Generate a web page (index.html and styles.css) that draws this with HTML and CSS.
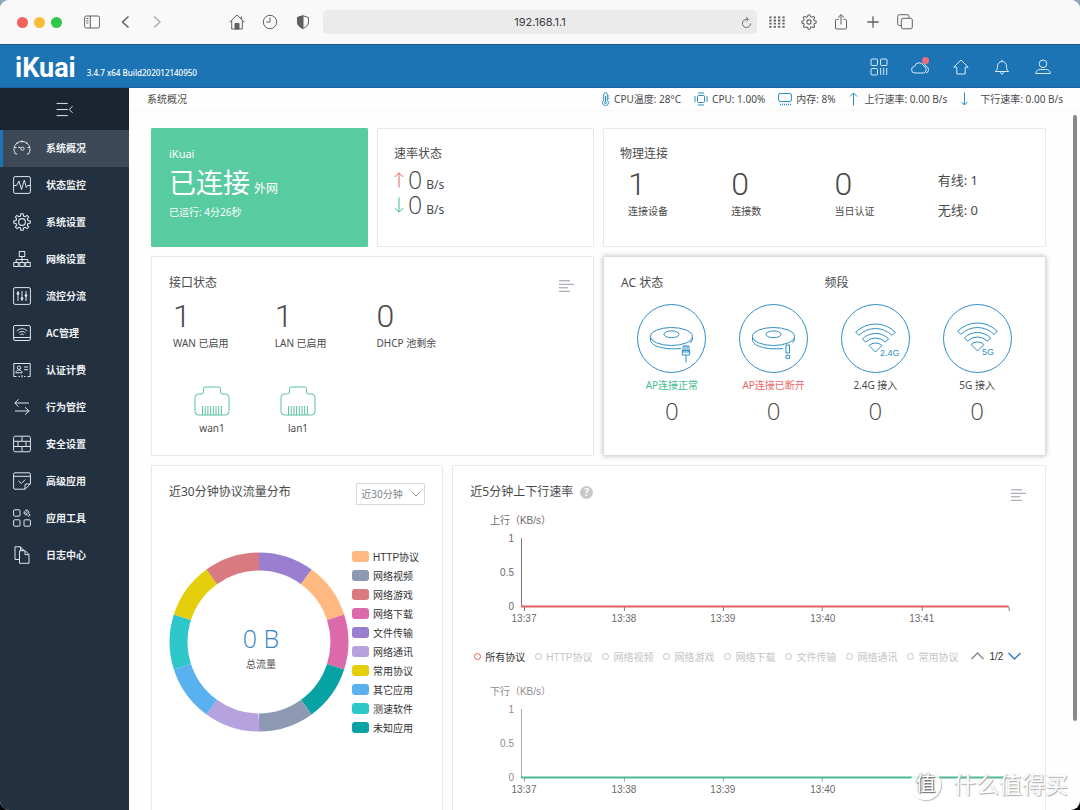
FILE: index.html
```html
<!DOCTYPE html>
<html lang="zh-CN">
<head>
<meta charset="utf-8">
<title>iKuai 系统概况</title>
<link rel="stylesheet" href="styles.css">
</head>
<body>
<div class="window">
  <div class="toolbar">
    <div class="lights"><span class="light red"></span><span class="light yellow"></span><span class="light green"></span></div>
    <div class="nav-tools">
      <button class="tool" aria-label="边栏"><svg viewBox="0 0 16 16"><rect x=".6" y="2" width="15" height="12" rx="1.8"/><path d="M6.3 2v12M2.400 4.500h2M2.400 6.800h2M2.400 9h2"/></svg></button>
      <button class="tool" aria-label="后退"><svg viewBox="0 0 16 16"><path d="M11.500 2.500L5.500 8l6 5.500" stroke-width="1.500"/></svg></button>
      <button class="tool dim" aria-label="前进"><svg viewBox="0 0 16 16"><path d="M4 2.500l6 5.500-6 5.500" stroke-width="1.300"/></svg></button>
    </div>
    <div class="page-tools">
      <button class="tool" aria-label="主页"><svg viewBox="0 0 16 16"><path d="M.5 8.300L8 1l7.500 7.300M2.700 6.500V15h10.600V6.500M12.300 5V2.300"/><path d="M6 15V9.500h4V15z" fill="currentColor"/></svg></button>
      <button class="tool" aria-label="历史"><svg viewBox="0 0 16 16"><circle cx="8" cy="8" r="6.700"/><path d="M8 3.500V8H4.200"/></svg></button>
      <button class="tool" aria-label="隐私"><svg viewBox="0 0 16 16"><path d="M8 1.800l5.500 1.700V8c0 2.800-2 5-5.500 6.500C4.500 13 2.500 10.800 2.500 8V3.500z"/><path d="M8 1.800V14.500C4.500 13 2.500 10.800 2.500 8V3.500z" fill="currentColor"/></svg></button>
    </div>
    <div class="address">
      <input class="address-input" type="text" aria-label="地址" value="192.168.1.1">
      <button class="reload" aria-label="重新载入"><svg viewBox="0 0 12 14"><path d="M10.500 8a4.500 4.500 0 1 1-4-4.500h1.200M5.500 1l2.500 2.500L5.500 6"/></svg></button>
    </div>
    <div class="window-tools">
      <button class="tool" aria-label="常用网站"><svg viewBox="0 0 16 16"><path d="M.3 3.300h15.400M.3 6.500h15.400M.3 9.700h15.400M.3 12.900h15.400" stroke-width="1.800" stroke-dasharray="2.300 2.060"/></svg></button>
      <button class="tool" aria-label="设置"><svg viewBox="0 0 24 24" stroke-width="1.600"><circle cx="12" cy="12" r="3.200"/><path d="M19.400 15a1.650 1.650 0 0 0 .33 1.820l.06.06a2 2 0 0 1 0 2.830 2 2 0 0 1-2.830 0l-.06-.06a1.650 1.650 0 0 0-1.820-.33 1.650 1.650 0 0 0-1 1.510V21a2 2 0 0 1-2 2 2 2 0 0 1-2-2v-.09A1.650 1.650 0 0 0 9 19.400a1.650 1.650 0 0 0-1.820.33l-.06.06a2 2 0 0 1-2.830 0 2 2 0 0 1 0-2.830l.06-.06a1.650 1.650 0 0 0 .33-1.820 1.650 1.650 0 0 0-1.510-1H3a2 2 0 0 1-2-2 2 2 0 0 1 2-2h.09A1.650 1.650 0 0 0 4.600 9a1.650 1.650 0 0 0-.33-1.820l-.06-.06a2 2 0 0 1 0-2.830 2 2 0 0 1 2.830 0l.06.06a1.650 1.650 0 0 0 1.820.33H9a1.650 1.650 0 0 0 1-1.510V3a2 2 0 0 1 2-2 2 2 0 0 1 2 2v.09a1.650 1.650 0 0 0 1 1.510 1.650 1.650 0 0 0 1.820-.33l.06-.06a2 2 0 0 1 2.830 0 2 2 0 0 1 0 2.830l-.06.06a1.650 1.650 0 0 0-.33 1.820V9a1.650 1.650 0 0 0 1.510 1H21a2 2 0 0 1 2 2 2 2 0 0 1-2 2h-.09a1.650 1.650 0 0 0-1.510 1z"/></svg></button>
      <button class="tool" aria-label="共享"><svg viewBox="0 0 16 16"><path d="M5.500 5.500H3.500a1 1 0 0 0-1 1V14a1 1 0 0 0 1 1h9a1 1 0 0 0 1-1V6.500a1 1 0 0 0-1-1h-2M8 10.500V.8M5 3.500L8 .7l3 2.800"/></svg></button>
      <button class="tool" aria-label="新标签页"><svg viewBox="0 0 16 16"><path d="M8 2.300v11.400M2.300 8h11.400" stroke-width="1.300"/></svg></button>
      <button class="tool" aria-label="标签页概览"><svg viewBox="0 0 16 16"><rect x="4.300" y="4.300" width="11" height="10.500" rx="1.800"/><path d="M4.300 11.500H2.500A1.800 1.800 0 0 1 .7 9.700V2.500A1.800 1.800 0 0 1 2.500.7h7.700A1.800 1.800 0 0 1 12 2.500v1.800"/></svg></button>
    </div>
  </div>

  <header class="header">
    <span class="logo">iKuai</span>
    <span class="version">3.4.7 x64 Build202012140950</span>
    <div class="header-actions">
      <button class="action" aria-label="应用"><svg viewBox="0 0 18 18"><rect x="1" y="1" width="6.500" height="6.500" rx="1"/><rect x="10.500" y="1" width="6.500" height="6.500" rx="1"/><rect x="1" y="10.500" width="6.500" height="6.500" rx="1"/><path d="M10.700 10v7M13.700 10v7M16.700 10v7"/></svg></button>
      <button class="action" aria-label="云服务"><svg viewBox="0 0 18 18"><path d="M4 15a3.300 3.300 0 0 1-.3-6.600A4.600 4.600 0 0 1 12.600 8a3.600 3.600 0 0 1-.3 7zM12 5a4 4 0 0 1 2.700 3.200A3.500 3.500 0 0 1 15 15"/></svg><span class="dot"></span></button>
      <button class="action" aria-label="首页"><svg viewBox="0 0 18 18"><path d="M9 2L1.800 9.200h3V16h8.400V9.200h3z"/></svg></button>
      <button class="action" aria-label="通知"><svg viewBox="0 0 18 18"><path d="M2.300 13.500c2-1.500 2.200-3.500 2.200-5.500a4.500 4.500 0 0 1 9 0c0 2 .2 4 2.200 5.500zM7.700 13.500v1.200a1.300 1.300 0 0 0 2.600 0v-1.200M9 3.500V1.800"/></svg></button>
      <button class="action" aria-label="用户"><svg viewBox="0 0 18 18"><circle cx="9" cy="5.800" r="3.800"/><path d="M1.800 15.500c0-3 2.200-4 4.700-4h5c2.500 0 4.700 1 4.700 4z"/></svg></button>
    </div>
  </header>

  <div class="body">
    <nav class="sidebar">
      <button class="collapse" aria-label="收起菜单"><svg viewBox="0 0 18 16"><path d="M0 1.500h12M0 8h12M0 14.500h12M17 4.500L13.500 8l3.500 3.500"/></svg></button>
      <a class="item active" href="#"><svg viewBox="0 0 18 18"><path d="M4.300 15H2.500a8 8 0 1 1 13 0h-1.800M9 1.500v2M1.500 8.500h2M14.500 8.500h2M3.700 3.700l1.300 1.300M14.300 3.700L13 5M5 8l3 1"/><circle cx="9.500" cy="9.700" r="1.600"/></svg><span>系统概况</span></a>
      <a class="item" href="#"><svg viewBox="0 0 18 18"><rect x=".6" y=".6" width="16.800" height="16.800" rx="1.500"/><path d="M.6 9.500h3L6 5l2.500 8.500L11.300 4l2 7.500 1.200-2h3"/></svg><span>状态监控</span></a>
      <a class="item" href="#"><svg viewBox="0 0 24 24" stroke-width="1.500"><circle cx="12" cy="12" r="4.500"/><path d="M10 4L10.500 1h3l.5 3 2.200.9 2.500-1.700 2.100 2.100-1.700 2.500.9 2.200 3 .5v3l-3 .5-.9 2.200 1.700 2.500-2.100 2.100-2.500-1.700-2.200.9-.5 3h-3l-.5-3-2.200-.9-2.500 1.700-2.100-2.100 1.700-2.500L4 14l-3-.5v-3l3-.5.9-2.200-1.700-2.500 2.100-2.100 2.500 1.700z"/></svg><span>系统设置</span></a>
      <a class="item" href="#"><svg viewBox="0 0 18 18"><rect x="6.300" y="1.500" width="5.400" height="5"/><path d="M9 6.500v6M3.200 12.500v-3h11.600v3"/><rect x=".8" y="12.500" width="4.500" height="4"/><rect x="6.800" y="12.500" width="4.500" height="4"/><rect x="12.700" y="12.500" width="4.500" height="4"/></svg><span>网络设置</span></a>
      <a class="item" href="#"><svg viewBox="0 0 18 18"><rect x=".6" y=".6" width="16.800" height="16.800" rx="1.500"/><path d="M5 4v10M9 4v10M13 4v10"/><g fill="currentColor"><circle cx="5" cy="6.500" r="1"/><circle cx="9" cy="11.500" r="1"/><circle cx="13" cy="8.500" r="1"/></g></svg><span>流控分流</span></a>
      <a class="item" href="#"><svg viewBox="0 0 18 18"><rect x=".6" y="1.500" width="16.800" height="15" rx="1.500"/><path d="M.6 13.500h16.800M3.700 7c3-3 7.600-3 10.600 0M5.500 9c2-2 5-2 7 0M7.300 10.800c1-1 2.400-1 3.400 0"/></svg><span>AC管理</span></a>
      <a class="item" href="#"><svg viewBox="0 0 18 18"><path d="M3.500 15.500H.8v-13h16.400v13h-2.700M5.500 15.500h1.500M11 15.500h1.500M9 14v2.500"/><circle cx="6" cy="6.700" r="1.700"/><path d="M2.800 11.800c.5-2 1.500-2.800 3.200-2.800s2.700.8 3.200 2.800zM11 6h4M11 8.700h4"/></svg><span>认证计费</span></a>
      <a class="item" href="#"><svg viewBox="0 0 18 18"><path d="M16 5H1.800M5.500 1.300L1.800 5l3.700 3.700M2 13h14.200M12 9.300l4.200 3.700L12 16.700"/></svg><span>行为管控</span></a>
      <a class="item" href="#"><svg viewBox="0 0 18 18"><rect x=".6" y="1.200" width="16.800" height="15.600" rx="1.500"/><path d="M.6 6.300h16.800M.6 11.500h16.800M9 1.200v5.100M5 6.300v5.200M13 6.300v5.200M9 11.500v5.300"/></svg><span>安全设置</span></a>
      <a class="item" href="#"><svg viewBox="0 0 18 18"><path d="M12 17.200H2A1.400 1.400 0 0 1 .6 15.800V2.200A1.400 1.400 0 0 1 2 .8h14a1.400 1.400 0 0 1 1.400 1.400V12L12 17.200V13a1 1 0 0 1 1-1h4.400M.6 4.300h16.800M5.500 9l2.800 2.500 4-4"/></svg><span>高级应用</span></a>
      <a class="item" href="#"><svg viewBox="0 0 18 18"><rect x=".6" y=".8" width="6.400" height="6.400" rx="1"/><rect x=".6" y="10.800" width="6.400" height="6.400" rx="1"/><rect x="11" y="10.800" width="6.400" height="6.400" rx="1"/><path d="M12.500 1.200l2.300 2.300-1.300 1.300-2.300-2.300c-.8 2 .8 4 3 3.300l1.600 1.600 1.400-1.400-1.500-1.500c.8-2.300-1-4.200-3.200-3.300z"/></svg><span>应用工具</span></a>
      <a class="item" href="#"><svg viewBox="0 0 18 18"><path d="M6 13.500H2V.8h5.500l3 3.200M7.500.8V4h3M6.500 4.700h5.700l3.800 3.800v8.800H6.500zM12 4.700v4h4"/></svg><span>日志中心</span></a>
    </nav>

    <main class="main">
      <div class="statusbar">
        <span class="crumb">系统概况</span>
        <span class="stat"><svg class="thermo" viewBox="0 0 9 14"><path d="M2.700 8.300V2.400a1.800 1.800 0 0 1 3.600 0v5.900a3 3 0 1 1-3.600 0zM4.500 4v6M6.500 4h1.800M6.500 6.300h1.800"/><circle cx="4.500" cy="10.700" r="1"/></svg>CPU温度: 28°C</span>
        <span class="stat"><svg class="wide" viewBox="0 0 14 14"><rect x="3.500" y="3.500" width="7" height="7" rx="1"/><path d="M5 0v2M7 0v2M9 0v2M5 12v2M7 12v2M9 12v2M0 5h2M0 7h2M0 9h2M12 5h2M12 7h2M12 9h2"/></svg>CPU: 1.00%</span>
        <span class="stat"><svg class="wide" viewBox="0 0 14 14"><rect x=".6" y="1.500" width="12.800" height="8" rx="1.500"/><path d="M2 12.500h11" stroke-width="1.600" stroke-dasharray="1 1"/></svg>内存: 8%</span>
        <span class="stat"><svg class="thermo" viewBox="0 0 9 14"><path d="M4.500 13.500V1M1 4.500L4.500 1 8 4.500"/></svg><span class="flow-label">上行速率: 0.00 B/s</span></span>
        <span class="stat"><svg class="thermo" viewBox="0 0 9 14"><path d="M4.500 .5V13M1.500 9.800L4.500 13l3-3.200"/></svg><span class="flow-label down-label">下行速率: 0.00 B/s</span></span>
      </div>

      <div class="cards">
        <section class="card quarter online">
          <h2 class="name">iKuai</h2>
          <p class="state"><span>已连接</span><small>外网</small></p>
          <p class="uptime">已运行: 4分26秒</p>
        </section>

        <section class="card quarter">
          <h2>速率状态</h2>
          <div class="rates">
            <p class="rate"><svg class="up" viewBox="0 0 10 16"><path d="M5 15.500V1M.8 5L5 .8 9.200 5"/></svg><b>0</b> B/s</p>
            <p class="rate"><svg class="down" viewBox="0 0 10 16"><path d="M5 .5V15M.8 11L5 15.200 9.200 11"/></svg><b>0</b> B/s</p>
          </div>
        </section>

        <section class="card half">
          <h2>物理连接</h2>
          <div class="metrics links">
            <div class="metric"><b>1</b><span>连接设备</span></div>
            <div class="metric"><b>0</b><span>连接数</span></div>
            <div class="metric"><b>0</b><span>当日认证</span></div>
            <div class="wires"><span>有线: 1</span><span>无线: 0</span></div>
          </div>
        </section>

        <section class="card half tall">
          <div class="card-head">
            <h2>接口状态</h2>
            <button class="more" aria-label="详情"><svg viewBox="0 0 15 12"><path d="M0 .8h11M0 4.300h15M0 7.800h9M0 11.300h11"/></svg></button>
          </div>
          <div class="metrics ifaces">
            <div class="metric"><b>1</b><span>WAN 已启用</span></div>
            <div class="metric"><b>1</b><span>LAN 已启用</span></div>
            <div class="metric"><b>0</b><span>DHCP 池剩余</span></div>
          </div>
          <div class="ports">
            <div class="port"><svg viewBox="0 0 36 30"><path d="M4.500 8H7.500Q9.500 8 9.500 6V2.500Q9.500 1 11 1h14q1.500 0 1.500 1.500V6q0 2 2 2h3q3.500 0 3.500 3.500v14q0 3.500-3.500 3.500h-27Q1 29 1 25.500v-14Q1 8 4.500 8z"/><path d="M8.500 20v9M11.200 20v9M13.900 20v9M16.600 20v9M19.300 20v9M22 20v9M24.700 20v9M27.400 20v9"/></svg><span>wan1</span></div>
            <div class="port"><svg viewBox="0 0 36 30"><path d="M4.500 8H7.500Q9.500 8 9.500 6V2.500Q9.500 1 11 1h14q1.500 0 1.500 1.500V6q0 2 2 2h3q3.500 0 3.500 3.500v14q0 3.500-3.500 3.500h-27Q1 29 1 25.500v-14Q1 8 4.500 8z"/><path d="M8.500 20v9M11.200 20v9M13.900 20v9M16.600 20v9M19.300 20v9M22 20v9M24.700 20v9M27.400 20v9"/></svg><span>lan1</span></div>
          </div>
        </section>

        <section class="card half tall raised">
          <div class="ac">
            <h2>AC 状态</h2>
            <h2>频段</h2>
            <div class="ap"><svg viewBox="0 0 69 69"><circle cx="34.500" cy="34.500" r="34"/><ellipse cx="34.500" cy="32.500" rx="21" ry="9"/><ellipse cx="34.500" cy="30.300" rx="7.500" ry="3.400"/><path d="M13.500 33v3.500c1 5.500 13 9.500 30.500 8M55.500 33v2.500l-2 3.500"/><path d="M46 42h6v6h-6zM45.300 46.500h7.400V51h-7.400zM48 42v4.500M50 42v4.500M49 51v7.500"/></svg><span class="ok">AP连接正常</span><b>0</b></div>
            <div class="ap"><svg viewBox="0 0 69 69"><circle cx="34.500" cy="34.500" r="34"/><ellipse cx="34.500" cy="32.500" rx="21" ry="9"/><ellipse cx="34.500" cy="30.300" rx="7.500" ry="3.400"/><path d="M13.500 33v3.500c1 5.500 13 9.500 30.500 8M55.500 33v2.500l-2 3.500"/><path d="M47 41h3.500v8H47zM47 51.300h3.500v3H47z"/></svg><span class="bad">AP连接已断开</span><b>0</b></div>
            <div class="ap"><svg viewBox="0 0 69 69"><circle cx="34.500" cy="34.500" r="34"/><path d="M14.700 28.200a28 28 0 0 1 39.600 0l-3.200 3.200a23.500 23.500 0 0 0-33.200 0zM21.400 34.900a18.500 18.500 0 0 1 26.200 0l-3.200 3.200a14 14 0 0 0-19.800 0zM28.100 41.600a9 9 0 0 1 12.800 0L34.500 48z"/><text x="39" y="52">2.4G</text></svg><span>2.4G 接入</span><b>0</b></div>
            <div class="ap"><svg viewBox="0 0 69 69"><circle cx="34.500" cy="34.500" r="34"/><path d="M14.700 27.200a28 28 0 0 1 39.600 0l-3.200 3.200a23.500 23.500 0 0 0-33.200 0zM21.400 33.900a18.500 18.500 0 0 1 26.200 0l-3.200 3.200a14 14 0 0 0-19.800 0zM28.100 40.600a9 9 0 0 1 12.800 0L34.500 47z"/><text x="39" y="51">5G</text></svg><span>5G 接入</span><b>0</b></div>
          </div>
        </section>

        <section class="card third bottom">
          <div class="card-head">
            <h2>近30分钟协议流量分布</h2>
            <div class="picker">
              <select aria-label="时间范围"><option>近30分钟</option></select>
              <svg viewBox="0 0 10 6"><path d="M.5 .5L5 5l4.500-4.500"/></svg>
            </div>
          </div>
          <div class="protocols">
            <svg class="donut" viewBox="0 0 180 180">
              <g transform="rotate(-90 90 90)" stroke-width="18">
                <circle class="c-file" cx="90" cy="90" r="80.500" pathLength="10" stroke-dasharray="1 9"/>
                <circle class="c-http" cx="90" cy="90" r="80.500" pathLength="10" stroke-dasharray="1 9" stroke-dashoffset="-1"/>
                <circle class="c-download" cx="90" cy="90" r="80.500" pathLength="10" stroke-dasharray="1 9" stroke-dashoffset="-2"/>
                <circle class="c-unknown" cx="90" cy="90" r="80.500" pathLength="10" stroke-dasharray="1 9" stroke-dashoffset="-3"/>
                <circle class="c-video" cx="90" cy="90" r="80.500" pathLength="10" stroke-dasharray="1 9" stroke-dashoffset="-4"/>
                <circle class="c-im" cx="90" cy="90" r="80.500" pathLength="10" stroke-dasharray="1 9" stroke-dashoffset="-5"/>
                <circle class="c-other" cx="90" cy="90" r="80.500" pathLength="10" stroke-dasharray="1 9" stroke-dashoffset="-6"/>
                <circle class="c-speed" cx="90" cy="90" r="80.500" pathLength="10" stroke-dasharray="1 9" stroke-dashoffset="-7"/>
                <circle class="c-common" cx="90" cy="90" r="80.500" pathLength="10" stroke-dasharray="1 9" stroke-dashoffset="-8"/>
                <circle class="c-game" cx="90" cy="90" r="80.500" pathLength="10" stroke-dasharray="1 9" stroke-dashoffset="-9"/>
              </g>
              <text class="total" x="92" y="96">0 B</text>
              <text class="total-label" x="92" y="116">总流量</text>
            </svg>
            <ul class="keys">
              <li><i class="c-http"></i>HTTP协议</li>
              <li><i class="c-video"></i>网络视频</li>
              <li><i class="c-game"></i>网络游戏</li>
              <li><i class="c-download"></i>网络下载</li>
              <li><i class="c-file"></i>文件传输</li>
              <li><i class="c-im"></i>网络通讯</li>
              <li><i class="c-common"></i>常用协议</li>
              <li><i class="c-other"></i>其它应用</li>
              <li><i class="c-speed"></i>测速软件</li>
              <li><i class="c-unknown"></i>未知应用</li>
            </ul>
          </div>
        </section>

        <section class="card two-thirds bottom">
          <div class="card-head">
            <h2>近5分钟上下行速率</h2>
            <span class="help">?</span>
            <button class="more" aria-label="详情"><svg viewBox="0 0 15 12"><path d="M0 .8h11M0 4.300h15M0 7.800h9M0 11.300h11"/></svg></button>
          </div>
          <svg class="chart" viewBox="0 0 592 124">
            <text x="37" y="14">上行（KB/s）</text>
            <g class="y"><text x="61" y="32">1</text><text x="61" y="66">0.5</text><text x="61" y="100">0</text></g>
            <path class="axis" d="M68.500 28v69M71.500 97v4M171.500 97v4M270.500 97v4M369.500 97v4M469.500 97v4M556.500 97v4"/>
            <path class="line-up" d="M68 96.500h488"/>
            <g class="x"><text x="71" y="112">13:37</text><text x="171" y="112">13:38</text><text x="270" y="112">13:39</text><text x="370" y="112">13:40</text><text x="469" y="112">13:41</text></g>
          </svg>
          <div class="series">
            <button class="serie on"><i></i>所有协议</button>
            <button class="serie"><i></i>HTTP协议</button>
            <button class="serie"><i></i>网络视频</button>
            <button class="serie"><i></i>网络游戏</button>
            <button class="serie"><i></i>网络下载</button>
            <button class="serie"><i></i>文件传输</button>
            <button class="serie"><i></i>网络通讯</button>
            <button class="serie"><i></i>常用协议</button>
            <span class="pager">
              <button class="page" aria-label="上一页"><svg viewBox="0 0 13 8"><path d="M.5 7L6.500 1l6 6"/></svg></button>
              <span>1/2</span>
              <button class="page next" aria-label="下一页"><svg viewBox="0 0 13 8"><path d="M.5 1l6 6 6-6"/></svg></button>
            </span>
          </div>
          <svg class="chart light-chart" viewBox="0 0 592 124">
            <text x="37" y="14">下行（KB/s）</text>
            <g class="y"><text x="61" y="32">1</text><text x="61" y="66">0.5</text><text x="61" y="100">0</text></g>
            <path class="axis" d="M68.500 28v69M71.500 97v4M171.500 97v4M270.500 97v4M369.500 97v4"/>
            <path class="line-down" d="M68 96.500h488"/>
            <g class="x"><text x="71" y="112">13:37</text><text x="171" y="112">13:38</text><text x="270" y="112">13:39</text><text x="370" y="112">13:40</text></g>
          </svg>
        </section>
      </div>
      <div class="scroll-thumb"></div>
    </main>
  </div>
  <div class="watermark"><span class="seal">值</span><span>什么值得买</span></div>
</div>
</body>
</html>
```

FILE: styles.css
```css
* { box-sizing: border-box; }

body {
  margin: 0;
  background: linear-gradient(#8fa8b8, #000);
  font-family: "Noto Sans", "Noto Sans CJK SC", sans-serif;
  font-size: 10px;
  color: #4a4a4a;
}

h2, p, ul { margin: 0; padding: 0; font-weight: 400; }
button { border: 0; padding: 0; background: none; color: inherit; font: inherit; cursor: pointer; }
svg { display: block; fill: none; stroke: currentColor; }
text { fill: currentColor; stroke: none; }

.window {
  position: relative;
  display: flex;
  flex-direction: column;
  height: 100vh;
  overflow: hidden;
  border-radius: 9px;
  background: #fefefe;
}

/* Browser toolbar */
.toolbar {
  display: flex;
  align-items: center;
  height: 44px;
  padding: 0 167px 0 17px;
  background: #f9f9f9;
  color: #606060;
}
.lights { display: flex; gap: 6px; }
.light { width: 11px; height: 11px; border-radius: 50%; }
.light.red { background: #f4605a; }
.light.yellow { background: #f9bd3a; }
.light.green { background: #31c648; }
.tool { width: 16px; height: 16px; }
.tool.dim { color: #a8a8a8; }
.tool svg { width: 16px; height: 16px; }
.nav-tools { display: flex; gap: 17px; margin-left: 22px; }
.page-tools { display: flex; gap: 17px; margin-left: 63px; }
.window-tools { display: flex; gap: 16px; }
.address { position: relative; flex: 1; margin: 0 12px; }
.address-input {
  display: block;
  width: 100%;
  height: 24px;
  border: 0;
  border-radius: 5px;
  background: #ebebeb;
  color: #3c3c3c;
  font: 11px Inter, "Liberation Sans", sans-serif;
  text-align: center;
}
.reload { position: absolute; right: 5px; top: 6px; }
.reload svg { width: 11px; height: 13px; }

/* Product header */
.header {
  display: flex;
  align-items: center;
  height: 44px;
  padding: 2px 28px 0 15px;
  border-top: 1px solid #15578c;
  border-bottom: 1px solid #1a639f;
  background: #1c74b4;
  color: #fff;
}
.logo { padding-top: 2px; font: 700 27px/36px Roboto, sans-serif; }
.version { margin-left: 11px; padding-top: 12px; font-size: 8px; line-height: 16px; font-weight: 500; }
.header-actions { display: flex; gap: 23px; margin-left: auto; }
.action { position: relative; width: 18px; height: 18px; color: #d6ecfb; }
.action svg { width: 18px; height: 18px; }
.dot { position: absolute; top: -1px; right: 0; width: 7px; height: 7px; border-radius: 50%; background: #ee6e7b; }

.body { display: flex; flex: 1; min-height: 0; }

/* Side menu */
.sidebar { flex: none; width: 129px; background: #223040; color: #eef1f4; }
.collapse { display: flex; align-items: center; justify-content: center; width: 100%; height: 42px; background: #1b2532; }
.collapse svg { width: 18px; height: 15px; }
.item {
  display: flex;
  align-items: center;
  gap: 15px;
  height: 37px;
  padding: 0 0 2px 10px;
  border-left: 3px solid transparent;
  color: inherit;
  font-weight: 600;
  text-decoration: none;
}
.item.active { border-color: #1c74b4; background: #3e4957; }
.item svg { width: 18px; height: 18px; color: #dfe5ea; }

/* Main area */
.main { position: relative; display: flex; flex: 1; flex-direction: column; min-width: 0; overflow: hidden; }
.statusbar {
  display: flex;
  align-items: center;
  gap: 13px;
  flex: none;
  height: 23px;
  padding: 0 17px 1px 18px;
  border-bottom: 1px solid #f7f7f7;
  line-height: 14px;
}
.crumb { margin-right: auto; }
.stat { display: flex; align-items: center; gap: 4px; }
.stat svg { color: #2a8fbd; }
.thermo { width: 9px; height: 14px; }
.wide { width: 14px; height: 14px; }
.flow-label { padding-left: 3px; }
.down-label { padding-left: 7px; }
.scroll-thumb { position: absolute; top: 27px; right: 3px; width: 4px; height: 606px; border-radius: 2px; background: #8a8a8a; }

.cards { display: grid; grid-template-columns: repeat(12, 1fr); gap: 9px; padding: 17px 34px 0 22px; }
.card { min-height: 119px; padding: 16px 16px 0; border: 1px solid #e8e8e8; border-radius: 1px; background: #fff; }
.card h2 { font-size: 12px; line-height: 18px; }
.quarter { grid-column: span 3; }
.third { grid-column: span 4; }
.half { grid-column: span 6; }
.two-thirds { grid-column: span 8; }
.tall { min-height: 200px; padding: 17px 17px 0; }
.bottom { min-height: 360px; padding: 17px 17px 0; }
.raised { border-color: #dcdcdc; box-shadow: 0 0 5px rgba(0, 0, 0, .25); }
.card-head { display: flex; align-items: flex-start; }
.more { margin: 6px 2px 0 auto; color: #949ba3; }
.more svg { width: 15px; height: 12px; }

.online { padding-left: 17px; border-color: #59cba1; background: #59cba1; color: #fff; }
.online .name { font-size: 11px; }
.state { display: flex; align-items: baseline; gap: 4px; height: 40px; font-size: 27px; line-height: 40px; }
.state small { font-size: 12px; }
.uptime { line-height: 18px; }

.rates { padding-top: 4px; }
.rate { display: flex; align-items: baseline; gap: 4px; height: 25px; font-size: 12px; line-height: 25px; }
.rate svg { width: 10px; height: 16px; align-self: center; }
.rate b { font: 300 25px/25px "Open Sans", "Noto Sans", sans-serif; }
.up { color: #e0645f; }
.down { color: #45b98b; }

.metrics { display: grid; grid-template-columns: repeat(4, 1fr); }
.metric b { display: block; font: 300 32px/36px Roboto, sans-serif; }
.metric span { display: block; line-height: 18px; }
.links { padding: 3px 0 0 8px; margin-right: -12px; }
.wires { display: grid; align-content: start; gap: 12px; padding-top: 5px; font-size: 13px; line-height: 18px; }
.ifaces { padding: 6px 0 0 4px; margin-right: -4px; }
.ports { display: flex; margin-top: 34px; }
.port { width: 86px; }
.port svg { width: 36px; height: 30px; margin: 0 auto; color: #5cc09b; }
.port span { display: block; margin-top: 4px; line-height: 16px; text-align: center; }

.ac { display: grid; grid-template-columns: repeat(4, 1fr); }
.ac h2 { grid-column: span 2; }
.ap { padding-top: 12px; text-align: center; }
.ap svg { width: 69px; height: 69px; margin: 0 auto; color: #2f8fc5; }
.ap text { font: 9px "Liberation Sans", sans-serif; }
.ap span { display: block; margin-top: 3px; line-height: 18px; }
.ap b { display: block; font: 300 24px/34px "Open Sans", "Noto Sans", sans-serif; }
.ap .ok { color: #45bd8d; }
.ap .bad { color: #e8696b; }

/* Protocol share */
.picker { position: relative; margin-left: auto; }
.picker select {
  display: block;
  width: 69px;
  height: 22px;
  padding: 0 4px;
  appearance: none;
  border: 1px solid #d6d9dc;
  border-radius: 1px;
  background: #fff;
  color: #7d848c;
  font: inherit;
}
.picker svg { position: absolute; top: 8px; right: 4px; width: 10px; height: 6px; color: #8a9097; pointer-events: none; }
.protocols { display: flex; align-items: center; gap: 3px; margin: 42px 0 0; }
.donut { flex: none; width: 180px; height: 180px; }
.total, .total-label { text-anchor: middle; }
.total { font: 300 25px "Open Sans", "Noto Sans", sans-serif; fill: #3683c4; }
.total-label { font-size: 10px; fill: #555; }
.keys { list-style: none; font-family: "Liberation Sans", "Noto Sans CJK SC", sans-serif; color: #333; white-space: nowrap; }
.keys li { display: flex; align-items: center; gap: 4px; height: 19px; }
.keys i { width: 17px; height: 11px; border-radius: 3px; background: currentColor; }
.keys i, .donut circle { color: var(--c); }
.c-http { --c: #ffb980; }
.c-video { --c: #8d98b3; }
.c-game { --c: #d87a80; }
.c-download { --c: #dc69aa; }
.c-file { --c: #9a7fd1; }
.c-im { --c: #b6a2de; }
.c-common { --c: #e5cf0d; }
.c-other { --c: #5ab1ef; }
.c-speed { --c: #2ec7c9; }
.c-unknown { --c: #07a2a4; }

/* Rate charts */
.help {
  width: 13px;
  height: 13px;
  margin: 3px 0 0 7px;
  border-radius: 50%;
  background: #c8c8c8;
  color: #fff;
  font-size: 10px;
  font-weight: 700;
  line-height: 13px;
  text-align: center;
}
.chart, .series { margin: 0 -17px; }
.chart { width: calc(100% + 34px); margin-top: 9px; color: #6a6a6a; font: 10px "Liberation Sans", "Noto Sans CJK SC", sans-serif; }
.light-chart { margin-top: 2px; color: #8c8c8c; }
.light-chart .x { color: #6a6a6a; }
.chart .y { text-anchor: end; }
.chart .x { text-anchor: middle; }
.axis { stroke: #777; }
.light-chart .axis { stroke: #aaa; }
.line-up { stroke: #e4605e; stroke-width: 2; }
.line-down { stroke: #4fba8f; stroke-width: 2; }
.series {
  display: flex;
  align-items: center;
  gap: 10px;
  height: 45px;
  padding-left: 21px;
  color: #c4c4c4;
  font-family: "Liberation Sans", "Noto Sans CJK SC", sans-serif;
  white-space: nowrap;
}
.serie { display: flex; align-items: center; gap: 4px; }
.serie i { width: 7px; height: 7px; border: 1px solid #c4c4c4; border-radius: 50%; }
.serie.on { color: #333; }
.serie.on i { border-color: #e4605e; }
.pager { display: flex; align-items: center; gap: 5px; padding-left: 3px; color: #333; }
.page { color: #888; }
.page svg { width: 13px; height: 8px; stroke-width: 1.4; }
.page.next { color: #2b7cc4; }

.watermark {
  position: absolute;
  right: 12px;
  bottom: 9px;
  display: flex;
  align-items: center;
  gap: 12px;
  color: #fff;
  font-size: 23px;
  line-height: 34px;
  text-shadow: 1px 1px 1px #aaa, 0 0 1px #bbb;
}
.seal { width: 31px; height: 31px; border-radius: 50%; background: rgba(255, 255, 255, .8); box-shadow: 1px 1px 1px #bbb; line-height: 30px; text-align: center; font-size: 20px; text-shadow: 0 0 2px #555, 1px 1px 1px #777; }
```
